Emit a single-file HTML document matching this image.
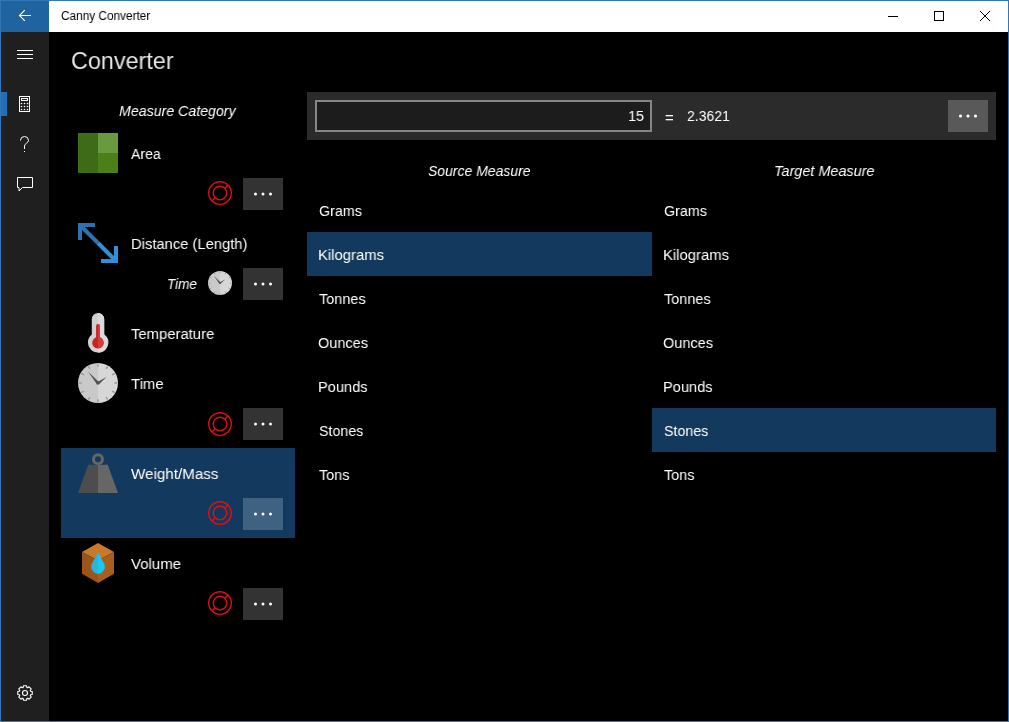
<!DOCTYPE html>
<html><head><meta charset="utf-8">
<style>
*{margin:0;padding:0;box-sizing:border-box}
html,body{width:1009px;height:722px;overflow:hidden;background:#000}
body{position:relative;font-family:"Liberation Sans",sans-serif;color:#fff;-webkit-font-smoothing:antialiased}
.t{will-change:transform;transform-origin:0 0}
.a{position:absolute}
.t{position:absolute;white-space:nowrap;line-height:20px;font-size:15px}
.i{font-style:italic}
.btn{position:absolute;width:40px;height:32px;background:#333}
.dots{position:absolute;left:0;top:0}
.sel{background:#133a5e}
</style></head><body>
<!-- window border -->
<div class="a" style="left:0;top:0;width:1009px;height:722px;border:1px solid #3376b8"></div>
<!-- title bar -->
<div class="a" style="left:1px;top:1px;width:1007px;height:31px;background:#fff"></div>
<div class="a" style="left:1px;top:1px;width:48px;height:31px;background:#1f63a0"></div>
<svg class="a" style="left:1px;top:1px" width="48" height="31" viewBox="1 1 48 31">
 <path d="M31 15.5H19.5M24.8 10.2L19.5 15.5L24.8 20.8" stroke="#fff" stroke-width="1.2" fill="none"/>
</svg>
<svg class="a" style="left:880px;top:1px" width="128" height="31" viewBox="880 1 128 31">
 <path d="M888 16.5H898" stroke="#000" stroke-width="1" fill="none"/>
 <rect x="934.5" y="11.5" width="9" height="9" stroke="#000" stroke-width="1" fill="none"/>
 <path d="M980 11L990 21M990 11L980 21" stroke="#000" stroke-width="1" fill="none"/>
</svg>
<!-- left pane -->
<div class="a" style="left:1px;top:32px;width:48px;height:689px;background:#1f1f1f"></div>
<div class="a" style="left:1px;top:92px;width:6px;height:24px;background:#2170b6"></div>
<svg class="a" style="left:1px;top:32px" width="48" height="689" viewBox="1 32 48 689">
 <g stroke="#fff" fill="none" stroke-width="1">
  <path d="M17 50.5H33M17 54.5H33M17 58.5H33"/>
  <rect x="19.5" y="96.5" width="10" height="15"/>
  <rect x="21.5" y="98.5" width="6" height="2"/>
  <path d="M23.5 183.5"/>
  <path d="M17.5 177.5H32.5V187.5H22.5L19 191V187.5H17.5Z" stroke-linejoin="miter"/>
  <path d="M20.5 140.5A4 4 0 0 1 28.5 140.5C28.5 142.8 24.5 143.5 24.5 146V149"/>
 </g>
 <g fill="#fff">
  <circle cx="21.5" cy="103.5" r="0.8"/><circle cx="24.5" cy="103.5" r="0.8"/><circle cx="27.5" cy="103.5" r="0.8"/>
  <circle cx="21.5" cy="106.5" r="0.8"/><circle cx="24.5" cy="106.5" r="0.8"/><circle cx="27.5" cy="106.5" r="0.8"/>
  <circle cx="21.5" cy="109.5" r="0.8"/><circle cx="24.5" cy="109.5" r="0.8"/><circle cx="27.5" cy="109.5" r="0.8"/>
  <rect x="24" y="151" width="1" height="1"/>
 </g>
 <g transform="translate(25 693)" stroke="#fff" fill="none" stroke-width="1.1">
  <circle r="2.5"/>
  <path d="M-1.82 -5.61L-1.54 -7.24L1.54 -7.24L1.82 -5.61L2.68 -5.26L4.03 -6.21L6.21 -4.03L5.26 -2.68L5.61 -1.82L7.24 -1.54L7.24 1.54L5.61 1.82L5.26 2.68L6.21 4.03L4.03 6.21L2.68 5.26L1.82 5.61L1.54 7.24L-1.54 7.24L-1.82 5.61L-2.68 5.26L-4.03 6.21L-6.21 4.03L-5.26 2.68L-5.61 1.82L-7.24 1.54L-7.24 -1.54L-5.61 -1.82L-5.26 -2.68L-6.21 -4.03L-4.03 -6.21L-2.68 -5.26Z" stroke-linejoin="round"/>
 </g>
</svg>
<!-- header -->

<svg class="a" style="left:78px;top:133px" width="40" height="40"><rect width="20" height="40" fill="#3e6b18"/><rect x="20" width="20" height="20" fill="#6a9a40"/><rect x="20" y="20" width="20" height="20" fill="#4b8019"/></svg>
<svg class="a" style="left:206px;top:179px" width="28" height="28" viewBox="-14 -14 28 28"><g stroke="#e21010" stroke-width="1.35" fill="none"><circle r="11.3"/><circle r="6.8"/><path d="M4.8 -4.8L8 -8M-4.8 4.8L-8 8"/></g></svg>
<div class="btn" style="left:243px;top:178px;background:#333"></div>
<svg class="a" style="left:243px;top:178px" width="40" height="32"><g fill="#fff"><circle cx="12.5" cy="16" r="1.5"/><circle cx="20" cy="16" r="1.5"/><circle cx="27.5" cy="16" r="1.5"/></g></svg>
<svg class="a" style="left:78px;top:223px" width="40" height="40"><defs><clipPath id="ctl"><path d="M0 0H40L0 40Z"/></clipPath><clipPath id="cbr"><path d="M40 0V40H0Z"/></clipPath><g id="arw"><rect width="17" height="4"/><rect width="4" height="17"/><rect x="23" y="36" width="17" height="4"/><rect x="36" y="23" width="4" height="17"/><path d="M0 2.9L2.9 0L40 37.1L37.1 40Z"/></g></defs><use href="#arw" fill="#2a72b2" clip-path="url(#ctl)"/><use href="#arw" fill="#3190da" clip-path="url(#cbr)"/></svg>
<svg class="a" style="left:208px;top:271px" width="24" height="24" viewBox="0 0 40 40"><path d="M20 0A20 20 0 0 0 20 40Z" fill="#c9c9c9"/><path d="M20 0A20 20 0 0 1 20 40Z" fill="#d7d7d7"/><path d="M20.00 3.70L20.00 0.70M28.15 5.88L29.65 3.29M34.12 11.85L36.71 10.35M36.30 20.00L39.30 20.00M34.12 28.15L36.71 29.65M28.15 34.12L29.65 36.71M20.00 36.30L20.00 39.30M11.85 34.12L10.35 36.71M5.88 28.15L3.29 29.65M3.70 20.00L0.70 20.00M5.88 11.85L3.29 10.35M11.85 5.88L10.35 3.29" stroke="#9a9a9a" stroke-width="1.4"/><path d="M18.6 20.8L10 8.5L21.2 19.2Z" fill="#555"/><path d="M19 19.2L28.5 14L21 21.2Z" fill="#555"/><circle cx="20" cy="20" r="1.8" fill="#555"/></svg>
<div class="btn" style="left:243px;top:268px;background:#333"></div>
<svg class="a" style="left:243px;top:268px" width="40" height="32"><g fill="#fff"><circle cx="12.5" cy="16" r="1.5"/><circle cx="20" cy="16" r="1.5"/><circle cx="27.5" cy="16" r="1.5"/></g></svg>
<svg class="a" style="left:78px;top:313px" width="40" height="40"><path d="M13.8 6.2A6.2 6.2 0 0 1 26.2 6.2V21.5A10.1 10.1 0 1 1 13.8 21.5Z" fill="#d0d0d0"/><path d="M20 0A6.2 6.2 0 0 1 26.2 6.2V21.5A10.1 10.1 0 0 1 20 39.7Z" fill="#dadada"/><path d="M18.1 13A1.9 1.9 0 0 1 21.9 13V24.3A5.8 5.8 0 1 1 18.1 24.3Z" fill="#cc2222"/><path d="M20 11.1A1.9 1.9 0 0 1 21.9 13V24.3A5.8 5.8 0 0 1 20 35.3Z" fill="#d63c3c"/></svg>
<svg class="a" style="left:78px;top:363px" width="40" height="40" viewBox="0 0 40 40"><path d="M20 0A20 20 0 0 0 20 40Z" fill="#c9c9c9"/><path d="M20 0A20 20 0 0 1 20 40Z" fill="#d7d7d7"/><path d="M20.00 3.70L20.00 0.70M28.15 5.88L29.65 3.29M34.12 11.85L36.71 10.35M36.30 20.00L39.30 20.00M34.12 28.15L36.71 29.65M28.15 34.12L29.65 36.71M20.00 36.30L20.00 39.30M11.85 34.12L10.35 36.71M5.88 28.15L3.29 29.65M3.70 20.00L0.70 20.00M5.88 11.85L3.29 10.35M11.85 5.88L10.35 3.29" stroke="#9a9a9a" stroke-width="1.4"/><path d="M18.6 20.8L10 8.5L21.2 19.2Z" fill="#555"/><path d="M19 19.2L28.5 14L21 21.2Z" fill="#555"/><circle cx="20" cy="20" r="1.8" fill="#555"/></svg>
<svg class="a" style="left:206px;top:410px" width="28" height="28" viewBox="-14 -14 28 28"><g stroke="#e21010" stroke-width="1.35" fill="none"><circle r="11.3"/><circle r="6.8"/><path d="M4.8 -4.8L8 -8M-4.8 4.8L-8 8"/></g></svg>
<div class="btn" style="left:243px;top:408px;background:#333"></div>
<svg class="a" style="left:243px;top:408px" width="40" height="32"><g fill="#fff"><circle cx="12.5" cy="16" r="1.5"/><circle cx="20" cy="16" r="1.5"/><circle cx="27.5" cy="16" r="1.5"/></g></svg>
<div class="a sel" style="left:61px;top:448px;width:234px;height:90px"></div>
<svg class="a" style="left:78px;top:453px" width="40" height="40"><circle cx="20" cy="6.3" r="4.5" stroke="#666" stroke-width="3" fill="none"/><path d="M10.3 11.7H20V40H0Z" fill="#4d4d4d"/><path d="M20 11.7H29.7L40 40H20Z" fill="#666"/></svg>
<svg class="a" style="left:206px;top:499px" width="28" height="28" viewBox="-14 -14 28 28"><g stroke="#e21010" stroke-width="1.35" fill="none"><circle r="11.3"/><circle r="6.8"/><path d="M4.8 -4.8L8 -8M-4.8 4.8L-8 8"/></g></svg>
<div class="btn" style="left:243px;top:498px;background:#3f6282"></div>
<svg class="a" style="left:243px;top:498px" width="40" height="32"><g fill="#fff"><circle cx="12.5" cy="16" r="1.5"/><circle cx="20" cy="16" r="1.5"/><circle cx="27.5" cy="16" r="1.5"/></g></svg>
<svg class="a" style="left:78px;top:543px" width="40" height="40"><path d="M20 0L36 9L20 17.6L4 9Z" fill="#c87a2a"/><path d="M4 9L20 17.6V40L4 30.8Z" fill="#9a5518"/><path d="M36 9L20 17.6V40L36 30.8Z" fill="#a85f1e"/><path d="M20 9.3L13.6 21.3A7.3 7.3 0 0 0 20 30.9Z" fill="#2ab4de"/><path d="M20 9.3L26.4 21.3A7.3 7.3 0 0 1 20 30.9Z" fill="#18c8f0"/></svg>
<svg class="a" style="left:206px;top:589px" width="28" height="28" viewBox="-14 -14 28 28"><g stroke="#e21010" stroke-width="1.35" fill="none"><circle r="11.3"/><circle r="6.8"/><path d="M4.8 -4.8L8 -8M-4.8 4.8L-8 8"/></g></svg>
<div class="btn" style="left:243px;top:588px;background:#333"></div>
<svg class="a" style="left:243px;top:588px" width="40" height="32"><g fill="#fff"><circle cx="12.5" cy="16" r="1.5"/><circle cx="20" cy="16" r="1.5"/><circle cx="27.5" cy="16" r="1.5"/></g></svg>


<!-- right panel -->
<div class="a" style="left:307px;top:92px;width:689px;height:48px;background:#2b2b2b"></div>
<div class="a" style="left:315px;top:100px;width:337px;height:32px;background:#1c1c1c;border:2px solid #868686"></div>
<div class="btn" style="left:948px;top:100px;background:#595959"></div>
<svg class="a" style="left:948px;top:100px" width="40" height="32"><g fill="#fff"><circle cx="12.5" cy="16" r="1.6"/><circle cx="20" cy="16" r="1.6"/><circle cx="27.5" cy="16" r="1.6"/></g></svg>

<div class="a sel" style="left:307px;top:232px;width:345px;height:44px"></div>
<div class="a sel" style="left:652px;top:408px;width:344px;height:44px"></div>

<div class="t" style="left:60.83px;top:6px;font-size:12.5px;line-height:20px;color:#000;transform:scaleX(0.9451)">Canny Converter</div>
<div class="t" style="left:71.31px;top:43px;font-size:24.5px;line-height:36px;color:#e4e4e4;transform:scaleX(0.9538)">Converter</div>
<div class="t" style="left:119.04px;top:101px;font-size:15.5px;line-height:20px;font-style:italic;transform:scaleX(0.9151)">Measure Category</div>
<div class="t" style="left:131.25px;top:144px;font-size:15.5px;line-height:20px;transform:scaleX(0.9115)">Area</div>
<div class="t" style="left:130.51px;top:234px;font-size:15.5px;line-height:20px;transform:scaleX(0.9514)">Distance (Length)</div>
<div class="t" style="left:167.13px;top:274px;font-size:14.5px;line-height:20px;font-style:italic;transform:scaleX(0.9322)">Time</div>
<div class="t" style="left:131.16px;top:324px;font-size:15.5px;line-height:20px;transform:scaleX(0.957)">Temperature</div>
<div class="t" style="left:130.86px;top:374px;font-size:15.5px;line-height:20px;transform:scaleX(0.9636)">Time</div>
<div class="t" style="left:131.10px;top:464px;font-size:15.5px;line-height:20px;transform:scaleX(0.9792)">Weight/Mass</div>
<div class="t" style="left:131.10px;top:554px;font-size:15.5px;line-height:20px;transform:scaleX(0.9686)">Volume</div>
<div class="t" style="left:627.73px;top:106px;font-size:15.5px;line-height:20px;transform:scaleX(0.9377)">15</div>
<div class="t" style="left:686.52px;top:106px;font-size:15.5px;line-height:20px;transform:scaleX(0.9043)">2.3621</div>
<div class="t" style="left:428.45px;top:161px;font-size:15.5px;line-height:20px;font-style:italic;transform:scaleX(0.902)">Source Measure</div>
<div class="t" style="left:773.70px;top:161px;font-size:15.5px;line-height:20px;font-style:italic;transform:scaleX(0.9311)">Target Measure</div>
<div class="t" style="left:318.51px;top:201px;font-size:15.5px;line-height:20px;transform:scaleX(0.9238)">Grams</div>
<div class="t" style="left:663.51px;top:201px;font-size:15.5px;line-height:20px;transform:scaleX(0.9238)">Grams</div>
<div class="t" style="left:318.40px;top:245px;font-size:15.5px;line-height:20px;transform:scaleX(0.9576)">Kilograms</div>
<div class="t" style="left:663.40px;top:245px;font-size:15.5px;line-height:20px;transform:scaleX(0.9576)">Kilograms</div>
<div class="t" style="left:318.87px;top:289px;font-size:15.5px;line-height:20px;transform:scaleX(0.934)">Tonnes</div>
<div class="t" style="left:663.87px;top:289px;font-size:15.5px;line-height:20px;transform:scaleX(0.934)">Tonnes</div>
<div class="t" style="left:318.40px;top:333px;font-size:15.5px;line-height:20px;transform:scaleX(0.9359)">Ounces</div>
<div class="t" style="left:663.40px;top:333px;font-size:15.5px;line-height:20px;transform:scaleX(0.9359)">Ounces</div>
<div class="t" style="left:318.42px;top:377px;font-size:15.5px;line-height:20px;transform:scaleX(0.9438)">Pounds</div>
<div class="t" style="left:663.42px;top:377px;font-size:15.5px;line-height:20px;transform:scaleX(0.9438)">Pounds</div>
<div class="t" style="left:318.91px;top:421px;font-size:15.5px;line-height:20px;transform:scaleX(0.917)">Stones</div>
<div class="t" style="left:663.91px;top:421px;font-size:15.5px;line-height:20px;transform:scaleX(0.917)">Stones</div>
<div class="t" style="left:318.87px;top:465px;font-size:15.5px;line-height:20px;transform:scaleX(0.9312)">Tons</div>
<div class="t" style="left:663.87px;top:465px;font-size:15.5px;line-height:20px;transform:scaleX(0.9312)">Tons</div>
<div class="t" style="left:665px;top:107.8px">=</div>

</body></html>
